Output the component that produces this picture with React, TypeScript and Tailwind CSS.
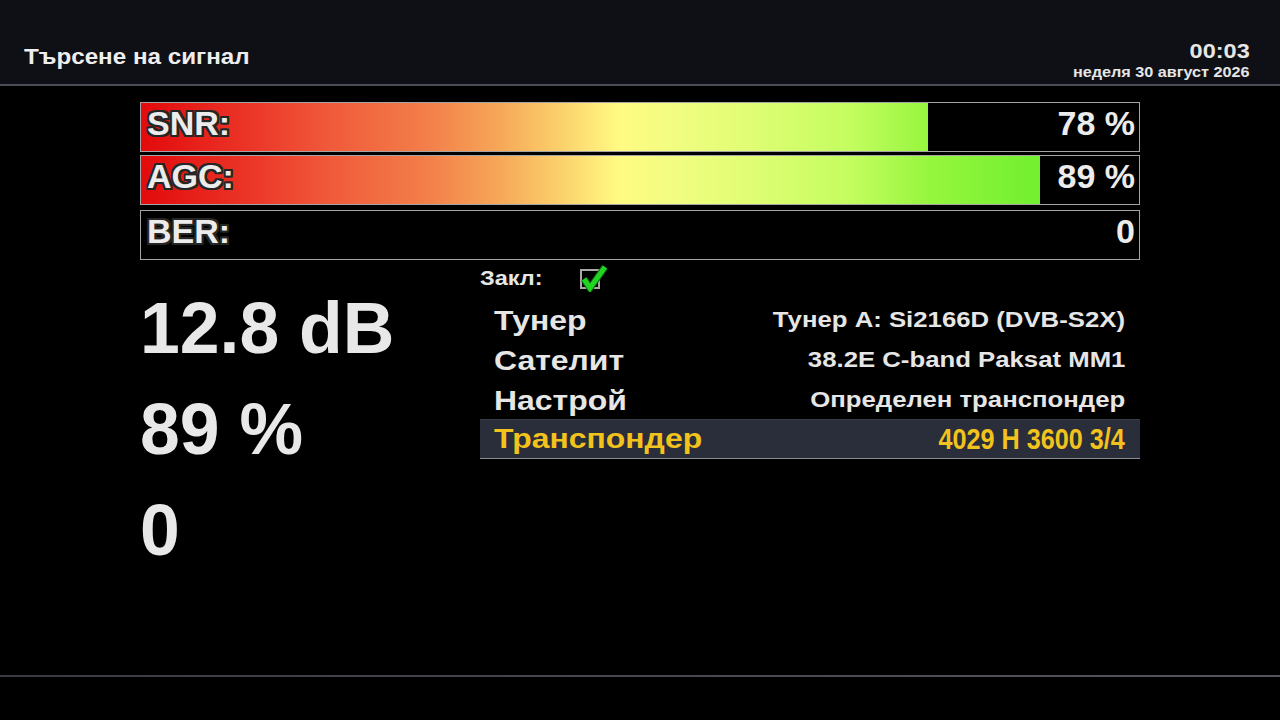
import React from "react";

const GRAD =
  "bg-[linear-gradient(to_right,#e20a0c_0%,#ec3a2a_12%,#f05a3a_19%,#f3804a_29%,#f6a858_36%,#fbd06c_42%,#fffb82_48%,#f0fd80_54%,#e0fd74_61%,#c4fd5f_71%,#96f63e_79%,#74f030_89%,#66ee2a_100%)]";

const OUTLINE =
  "[text-shadow:-2px_-2px_0_#262626,2px_-2px_0_#262626,-2px_2px_0_#262626,2px_2px_0_#262626,0_2px_0_#262626,0_-2px_0_#262626,2px_0_0_#262626,-2px_0_0_#262626]";

function Bar({ label, value, fill }: { label: string; value: string; fill: string }) {
  return (
    <div className="grid h-[50px] border border-[#a4a4a4]">
      <div className={`col-start-1 row-start-1 h-full ${fill} ${GRAD} bg-[length:998px_100%] bg-no-repeat`} />
      <div className="col-start-1 row-start-1 flex justify-between pl-[6px] pr-[4px] pt-[4px] text-[34px] leading-[33px] font-bold text-[#ececec]">
        <span className={OUTLINE}>{label}</span>
        <span>{value}</span>
      </div>
    </div>
  );
}

function Row({ label, value }: { label: string; value: string }) {
  return (
    <div className="flex h-[40px] items-start justify-between pl-[14px] pr-[15px] text-[#e6e6e6] font-bold">
      <span className="inline-block origin-left scale-x-[1.14] pt-[4px] text-[28px] leading-[36px]">{label}</span>
      <span className="inline-block origin-right scale-x-[1.17] pt-[3px] text-[22px] leading-[36px]">{value}</span>
    </div>
  );
}

export default function App() {
  return (
    <div className="flex h-[720px] w-[1280px] flex-col bg-black font-['Liberation_Sans',Arial,sans-serif] text-[#e6e6e6]">
      <header className="flex h-[86px] shrink-0 justify-between border-b-2 border-[#4d4d55] bg-[#0f1015] pl-[24px] pr-[30px]">
        <div className="pt-[44px]">
          <span className="inline-block origin-left scale-x-[1.1] text-[22px] font-bold leading-[26px] text-[#eeeeee]">
            Търсене на сигнал
          </span>
        </div>
        <div className="flex flex-col items-end pt-[39px] font-bold text-[#e6e6e6]">
          <span className="inline-block origin-right scale-x-[1.12] text-[21px] leading-[24px]">00:03</span>
          <span className="inline-block origin-right scale-x-[1.08] text-[15px] leading-[18px]">неделя 30 август 2026</span>
        </div>
      </header>

      <main className="h-[589px] shrink-0 px-[140px] pt-[16px]">
        <div className="flex flex-col">
          <Bar label="SNR:" value="78 %" fill="w-[787px]" />
          <div className="mt-[3px]">
            <Bar label="AGC:" value="89 %" fill="w-[899px]" />
          </div>
          <div className="mt-[5px]">
            <Bar label="BER:" value="0" fill="w-0" />
          </div>
        </div>

        <div className="mt-[7px] flex">
          <div className="w-[340px] pt-[11px] text-[71.5px] font-bold leading-[101px] text-[#e8e8e8]">
            <div>12.8 dB</div>
            <div>89 %</div>
            <div>0</div>
          </div>

          <div className="flex flex-1 flex-col">
            <div className="flex h-[24px] items-center">
              <span className="inline-block w-[100px]">
                <span className="inline-block origin-left scale-x-[1.12] text-[21px] font-bold leading-[24px]">Закл:</span>
              </span>
              <div className="relative h-[20px] w-[20px] border-2 border-[#a8a8a8]">
                <svg className="absolute left-[-2px] top-[-7px]" width="28" height="28" viewBox="0 0 28 28">
                  <path d="M4 15 L10 24 L25 3" fill="none" stroke="#0b5e0b" strokeWidth="7" strokeLinejoin="miter" />
                  <path d="M4 15 L10 24 L25 3" fill="none" stroke="#22d422" strokeWidth="5" strokeLinejoin="miter" />
                </svg>
              </div>
            </div>

            <div className="mt-[8px] flex flex-col">
              <Row label="Тунер" value="Тунер A: Si2166D (DVB-S2X)" />
              <Row label="Сателит" value="38.2E C-band Paksat MM1" />
              <Row label="Настрой" value="Определен транспондер" />
              <div className="flex h-[40px] items-start justify-between border-t border-b border-t-[#3a3d48] border-b-[#8c8e98] bg-[#2a2d3a] pl-[14px] pr-[15px] font-bold text-[#f2c31c]">
                <span className="inline-block origin-left scale-x-[1.14] pt-[1px] text-[28px] leading-[35px]">Транспондер</span>
                <span className="inline-block origin-right scale-x-[0.84] pt-[1px] text-[30px] leading-[35px]">4029 H 3600 3/4</span>
              </div>
            </div>
          </div>
        </div>
      </main>

      <div className="h-[2px] shrink-0 bg-[linear-gradient(to_right,#3a3a40,#55555c)]" />
      <div className="flex-1 bg-black" />
    </div>
  );
}
